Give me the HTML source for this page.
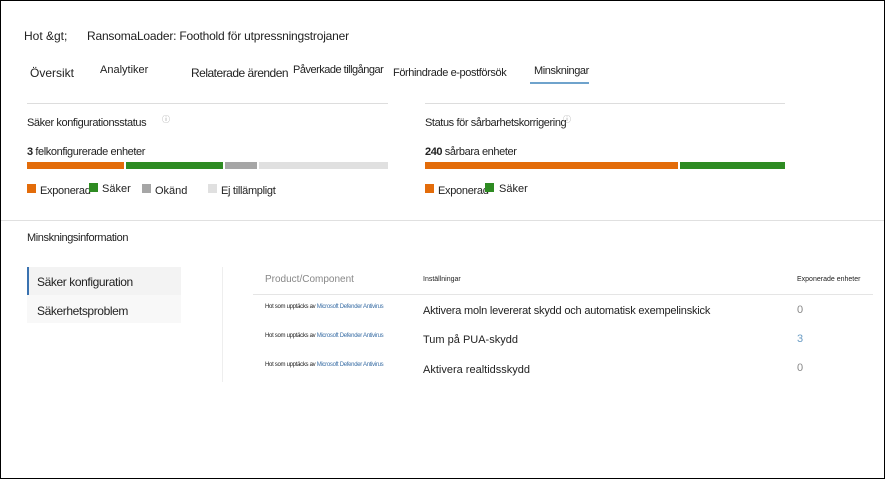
<!DOCTYPE html>
<html><head><meta charset="utf-8"><style>
*{margin:0;padding:0;box-sizing:border-box}
body{width:885px;height:479px;overflow:hidden;background:#fff;font-family:"Liberation Sans",sans-serif;color:#222;position:relative}
.frame{position:absolute;left:0;top:0;width:885px;height:479px;border:1px solid #000}
.t{position:absolute;white-space:nowrap}
.r{position:absolute}
</style></head><body>
<div class="frame"></div>
<div class="t" style="left:24px;top:29px;font-size:12px">Hot &amp;gt;</div>
<div class="t" style="left:87px;top:29px;font-size:12px;letter-spacing:-0.2px">RansomaLoader: Foothold för utpressningstrojaner</div>
<div class="t" style="left:30px;top:66px;font-size:12px">Översikt</div>
<div class="t" style="left:100px;top:64px;font-size:11px">Analytiker</div>
<div class="t" style="left:191px;top:66px;font-size:12px;letter-spacing:-0.5px">Relaterade ärenden</div>
<div class="t" style="left:293px;top:64px;font-size:11px;letter-spacing:-0.5px">Påverkade tillgångar</div>
<div class="t" style="left:393px;top:67px;font-size:11px;letter-spacing:-0.4px">Förhindrade e-postförsök</div>
<div class="t" style="left:534px;top:65px;font-size:11px;letter-spacing:-0.4px">Minskningar</div>
<div class="r" style="left:530px;top:82px;width:59px;height:2px;background:#6fa3cc"></div>
<div class="r" style="left:27px;top:103px;width:361px;height:1px;background:#ddd"></div>
<div class="r" style="left:425px;top:103px;width:360px;height:1px;background:#ddd"></div>
<div class="t" style="left:27px;top:117px;font-size:11px;letter-spacing:-0.4px">Säker konfigurationsstatus</div>
<div class="t" style="left:162px;top:114px;font-size:8px;color:#999">ⓘ</div>
<div class="t" style="left:425px;top:117px;font-size:11px;letter-spacing:-0.4px">Status för sårbarhetskorrigering</div>
<div class="t" style="left:563px;top:114px;font-size:8px;color:#999">ⓘ</div>
<div class="t" style="left:27px;top:146px;font-size:11px;letter-spacing:-0.4px"><b>3</b> felkonfigurerade enheter</div>
<div class="t" style="left:425px;top:146px;font-size:11px;letter-spacing:-0.4px"><b>240</b> sårbara enheter</div>
<div class="r" style="left:27px;top:162px;width:97px;height:7px;background:#e36c0a"></div>
<div class="r" style="left:126px;top:162px;width:97px;height:7px;background:#2e8b22"></div>
<div class="r" style="left:225px;top:162px;width:32px;height:7px;background:#a6a6a6"></div>
<div class="r" style="left:259px;top:162px;width:129px;height:7px;background:#e0e0e0"></div>
<div class="r" style="left:425px;top:162px;width:253px;height:7px;background:#e36c0a"></div>
<div class="r" style="left:680px;top:162px;width:105px;height:7px;background:#2e8b22"></div>
<div class="r" style="left:27px;top:184px;width:9px;height:9px;background:#e36c0a"></div>
<div class="t" style="left:40px;top:185px;font-size:11px;letter-spacing:-0.3px">Exponerad</div>
<div class="r" style="left:89px;top:183px;width:9px;height:9px;background:#2e8b22"></div>
<div class="t" style="left:102px;top:183px;font-size:11px">Säker</div>
<div class="r" style="left:142px;top:184px;width:9px;height:9px;background:#a6a6a6"></div>
<div class="t" style="left:155px;top:185px;font-size:11px">Okänd</div>
<div class="r" style="left:208px;top:184px;width:9px;height:9px;background:#e0e0e0"></div>
<div class="t" style="left:221px;top:185px;font-size:11px;letter-spacing:-0.3px">Ej tillämpligt</div>
<div class="r" style="left:425px;top:184px;width:9px;height:9px;background:#e36c0a"></div>
<div class="t" style="left:438px;top:185px;font-size:11px;letter-spacing:-0.3px">Exponerad</div>
<div class="r" style="left:485px;top:183px;width:9px;height:9px;background:#2e8b22"></div>
<div class="t" style="left:499px;top:183px;font-size:11px">Säker</div>
<div class="r" style="left:1px;top:220px;width:883px;height:1px;background:#e0e0e0"></div>
<div class="t" style="left:27px;top:232px;font-size:11px;letter-spacing:-0.4px">Minskningsinformation</div>
<div class="r" style="left:27px;top:267px;width:154px;height:28px;background:#f3f3f3;border-left:2px solid #3a72b0"></div>
<div class="r" style="left:27px;top:295px;width:154px;height:28px;background:#f8f8f8"></div>
<div class="t" style="left:37px;top:275px;font-size:12px;letter-spacing:-0.4px">Säker konfiguration</div>
<div class="t" style="left:37px;top:304px;font-size:12px;letter-spacing:-0.4px">Säkerhetsproblem</div>
<div class="r" style="left:222px;top:267px;width:1px;height:115px;background:#eee"></div>
<div class="t" style="left:265px;top:274px;font-size:10px;color:#888">Product/Component</div>
<div class="t" style="left:423px;top:276px;font-size:7px">Inställningar</div>
<div class="t" style="left:797px;top:276px;font-size:7px">Exponerade enheter</div>
<div class="r" style="left:253px;top:294px;width:620px;height:1px;background:#e5e5e5"></div>
<div class="t" style="left:265px;top:304px;font-size:6px;letter-spacing:-0.3px">Hot som upptäcks av <span style="color:#3a6ea5">Microsoft Defender Antivirus</span></div>
<div class="t" style="left:423px;top:305px;font-size:11px;letter-spacing:-0.2px">Aktivera moln levererat skydd och automatisk exempelinskick</div>
<div class="t" style="left:797px;top:304px;font-size:11px;color:#888">0</div>
<div class="t" style="left:265px;top:333px;font-size:6px;letter-spacing:-0.3px">Hot som upptäcks av <span style="color:#3a6ea5">Microsoft Defender Antivirus</span></div>
<div class="t" style="left:423px;top:334px;font-size:11px">Tum på PUA-skydd</div>
<div class="t" style="left:797px;top:333px;font-size:11px;color:#6a9cc4">3</div>
<div class="t" style="left:265px;top:362px;font-size:6px;letter-spacing:-0.3px">Hot som upptäcks av <span style="color:#3a6ea5">Microsoft Defender Antivirus</span></div>
<div class="t" style="left:423px;top:364px;font-size:11px">Aktivera realtidsskydd</div>
<div class="t" style="left:797px;top:362px;font-size:11px;color:#888">0</div>
</body></html>
